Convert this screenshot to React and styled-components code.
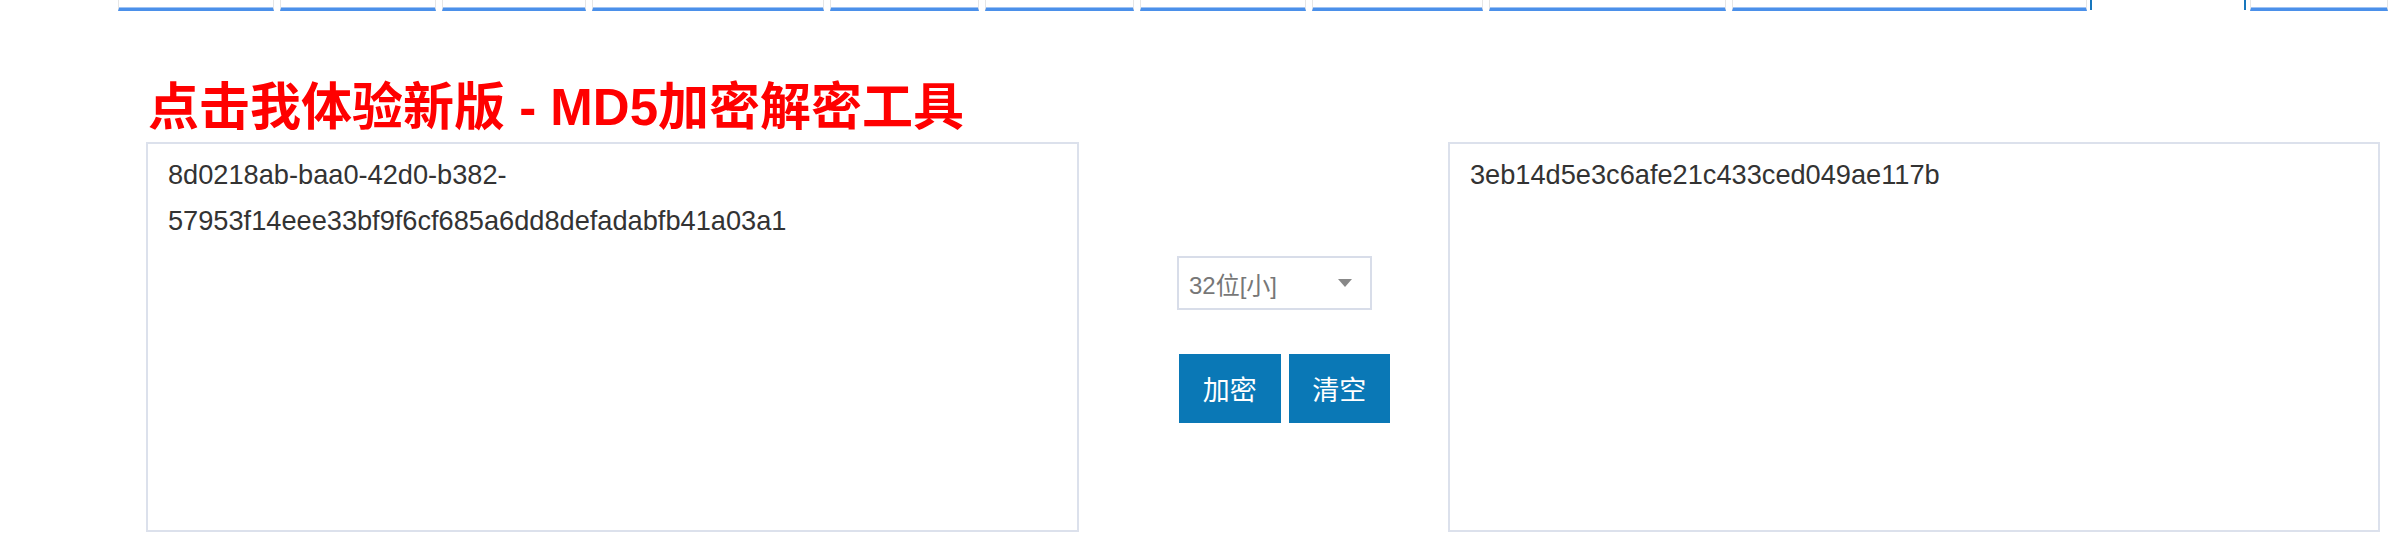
import React from "react";
import styled, { createGlobalStyle } from "styled-components";

const GlobalStyle = createGlobalStyle`
  html, body { margin: 0; padding: 0; background: #ffffff; }
  body { font-family: "Liberation Sans", Arial, "Noto Sans CJK SC", sans-serif; }
`;

const Nav = styled.div`
  display: flex;
  align-items: flex-end;
  height: 11px;
  padding-left: 118px;
  gap: 6px;
`;

const Tab = styled.div`
  box-sizing: border-box;
  width: ${(p) => p.$w}px;
  height: 11px;
  margin-left: ${(p) => p.$ml || 0}px;
  border-left: 1px solid #e6e6e6;
  border-right: 1px solid #e6e6e6;
  border-bottom: 3px solid #4b90ea;
  box-shadow: inset 0 -1px 0 #9fc3f3;
`;

const VLine = styled.div`
  width: 2px;
  height: 10px;
  align-self: flex-start;
  background: #1877bd;
  margin-left: ${(p) => p.$ml}px;
`;

const Title = styled.h1`
  margin: 66px 0 4px 148px;
  font-family: "Liberation Sans", "Noto Sans CJK SC", sans-serif;
  font-size: 51px;
  line-height: 61px;
  font-weight: bold;
  color: #ff0000;
  cursor: pointer;
`;

const Row = styled.div`
  display: flex;
  align-items: flex-start;
  padding-left: 146px;
`;

const Box = styled.textarea`
  box-sizing: border-box;
  width: ${(p) => p.$w}px;
  height: 390px;
  margin: 0;
  padding: 8px 20px;
  border: 2px solid #dce1ec;
  font-family: "Liberation Sans", Arial, sans-serif;
  font-size: 27.2px;
  line-height: 46px;
  color: #333333;
  background: #ffffff;
  resize: none;
  outline: none;
  overflow: hidden;
`;

const Middle = styled.div`
  width: 213px;
  margin: 0 58px 0 98px;
  padding-top: 114px;
  display: flex;
  flex-direction: column;
  gap: 44px;
`;

const Select = styled.div`
  box-sizing: border-box;
  width: 195px;
  height: 54px;
  border: 2px solid #d8dde9;
  display: flex;
  align-items: center;
  justify-content: space-between;
  padding: 0 18px 0 10px;
  color: #777777;
  font-family: "Liberation Sans", Arial, "Noto Sans CJK SC", sans-serif;
  font-size: 24px;
  background: #ffffff;
`;

const Caret = styled.span`
  width: 0;
  height: 0;
  border-left: 7.5px solid transparent;
  border-right: 7.5px solid transparent;
  border-top: 8px solid #888888;
`;

const Buttons = styled.div`
  display: flex;
  gap: 8px;
  padding-left: 2px;
`;

const Button = styled.button`
  width: 102px;
  height: 69px;
  border: none;
  padding: 0;
  background: #0a78b6;
  color: #ffffff;
  font-family: "Noto Sans CJK SC", sans-serif;
  font-size: 27px;
  cursor: pointer;
`;

const tabs = [156, 156, 144, 232, 149, 149, 166, 171, 237, 355];

export default function App() {
  return (
    <>
      <GlobalStyle />
      <Nav>
        {tabs.map((w, i) => (
          <Tab key={i} $w={w} />
        ))}
        <VLine $ml={-3} />
        <VLine $ml={146} />
        <Tab $w={138} $ml={-2} />
      </Nav>
      <Title>点击我体验新版 - MD5加密解密工具</Title>
      <Row>
        <Box
          $w={933}
          readOnly
          defaultValue="8d0218ab-baa0-42d0-b382-57953f14eee33bf9f6cf685a6dd8defadabfb41a03a1"
        />
        <Middle>
          <Select>
            <span>32位[小]</span>
            <Caret />
          </Select>
          <Buttons>
            <Button>加密</Button>
            <Button>清空</Button>
          </Buttons>
        </Middle>
        <Box $w={932} readOnly defaultValue="3eb14d5e3c6afe21c433ced049ae117b" />
      </Row>
    </>
  );
}
